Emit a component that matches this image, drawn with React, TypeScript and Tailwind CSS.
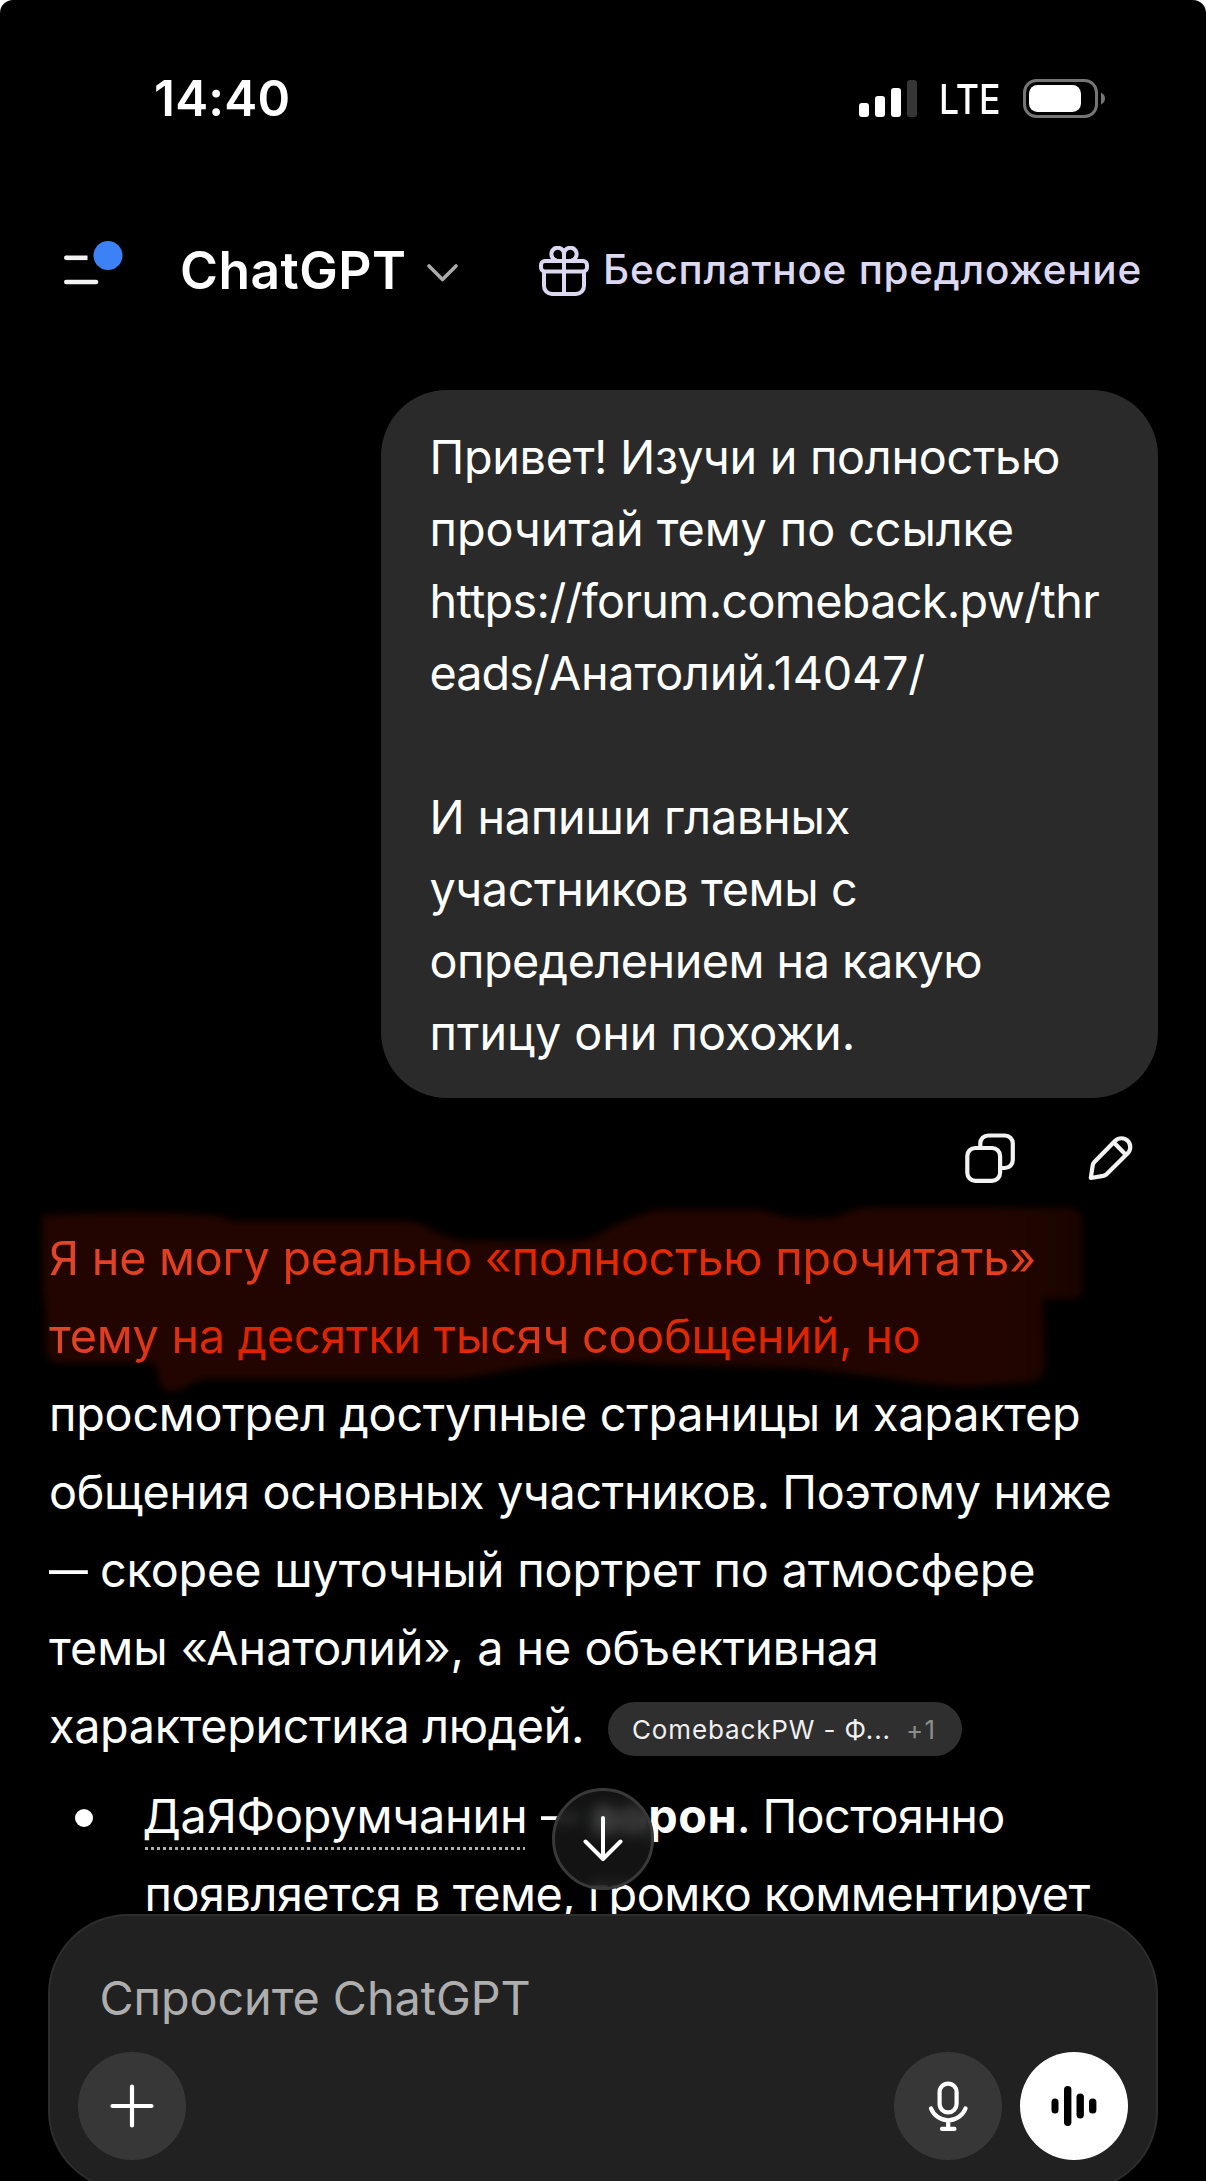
import React from 'react';

const userLines = [
  { text: 'Привет! Изучи и полностью', className: 'tracking-[-0.306px]' },
  { text: 'прочитай тему по ссылке', className: 'tracking-[-0.101px]' },
  { text: 'https://forum.comeback.pw/thr', className: 'tracking-[-0.66px]' },
  { text: 'eads/Анатолий.14047/', className: 'tracking-[-0.2px]' },
  { text: '', className: '' },
  { text: 'И напиши главных', className: 'tracking-[-0.229px]' },
  { text: 'участников темы с', className: 'tracking-[-0.376px]' },
  { text: 'определением на какую', className: 'tracking-[-0.519px]' },
  { text: 'птицу они похожи.', className: 'tracking-[-0.042px]' },
];

const answerLines = [
  {
    text: 'Я не могу реально «полностью прочитать»',
    className:
      'tracking-[-0.246px] w-fit text-transparent bg-clip-text bg-[linear-gradient(90deg,#e0452b,#e3381a_25%,#e02600_40%,#e82600_60%,#e0300e_75%,#e4401e)]',
  },
  {
    text: 'тему на десятки тысяч сообщений, но',
    className:
      'tracking-[-0.237px] w-fit text-transparent bg-clip-text bg-[linear-gradient(90deg,#e0472d,#de3315_12%,#dd2200_22%,#e02400_45%,#e03a1c_58%,#e02600_75%,#dc2200)]',
  },
  { text: 'просмотрел доступные страницы и характер', className: 'tracking-[-0.255px]' },
  { text: 'общения основных участников. Поэтому ниже', className: 'tracking-[-0.322px]' },
  { text: '— скорее шуточный портрет по атмосфере', className: 'tracking-[-0.14px]' },
  { text: 'темы «Анатолий», а не объективная', className: 'tracking-[-0.031px]' },
];

// long dash, a little shorter than the one in the font
const Dash = () => <span className="inline-block w-[38px] origin-left scale-x-[0.83]">—</span>;

const StatusBar = () => {
  return (
    <div className="flex h-[196px] items-center justify-between pl-[154px] pr-[101px]">
      <span className="mt-[2px] text-[49.5px] font-semibold leading-none tracking-[0.21px]">14:40</span>
      <div className="flex items-center">
        <svg width="58" height="37" viewBox="0 0 58 37" fill="#fff">
          <rect x="0" y="23" width="10" height="14" rx="3" />
          <rect x="16" y="16" width="10" height="21" rx="3" />
          <rect x="32" y="8" width="10" height="29" rx="3" />
          <rect x="48" y="0" width="10" height="37" rx="3" fill="#363636" />
        </svg>
        <span className="ml-[22px] mt-[3px] w-[60px] origin-left scale-x-[0.87] text-[41px] font-medium leading-none">LTE</span>
        <svg className="ml-[24px]" width="82" height="39" viewBox="0 0 82 39">
          <rect x="1.5" y="1.5" width="72" height="36" rx="12" fill="none" stroke="#757575" strokeWidth="3" />
          <rect x="6" y="6" width="52" height="27" rx="8.5" fill="#fff" />
          <path d="M78 13.5q4 2.2 4 6t-4 6z" fill="#757575" />
        </svg>
      </div>
    </div>
  );
};

const Header = () => {
  return (
    <header className="flex h-[148px] items-center pl-16 pr-[64px]">
      <svg className="mb-[16px]" width="60" height="46" viewBox="0 0 60 46">
        <path d="M2.3 18.8H23.5" stroke="#f3f3f3" strokeWidth="4.6" />
        <circle cx="2.3" cy="18.8" r="2.3" fill="#f3f3f3" />
        <path d="M2.3 43H32" stroke="#f3f3f3" strokeWidth="4.6" strokeLinecap="round" />
        <circle cx="44" cy="16.5" r="14.5" fill="#3c82f6" />
      </svg>
      <h1 className="ml-[56px] mt-[1px] text-[51.5px] font-[560] leading-none tracking-[0.5px]">ChatGPT</h1>
      <svg className="ml-[19px] mt-[5px]" width="33" height="20" viewBox="0 0 33 20" fill="none">
        <path d="M3 3l13.5 13.5L30 3" stroke="#ababab" strokeWidth="3.6" strokeLinecap="round" strokeLinejoin="round" />
      </svg>
      <div className="ml-auto mt-[1px] flex items-center text-[#dcd8f2]">
        <svg width="50" height="50" viewBox="539 245 50 50" fill="none" stroke="currentColor" strokeWidth="4">
          <rect x="541" y="260" width="46" height="10.5" rx="4" />
          <path d="M544 270.5V285a8 8 0 0 0 8 8h24a8 8 0 0 0 8-8v-14.500M564 257v36" />
          <path d="M564 259.500V253a6.300 6.300 0 1 0-11.500 3.600q1.500 2.900 4.500 2.900M564 253a6.300 6.300 0 1 1 11.500 3.600q-1.500 2.900-4.500 2.900" />
        </svg>
        <span className="ml-[14px] text-[40.5px] font-medium leading-none tracking-[0.74px]">Бесплатное предложение</span>
      </div>
    </header>
  );
};

const UserMessage = () => {
  return (
    <div className="ml-[381px] mt-[46px] h-[708px] w-[777px] rounded-[66px] bg-[#2a2a2a] pl-[48.5px] pt-[31px]">
      {userLines.map((line, i) => (
        <p key={i} className={`h-[72px] whitespace-nowrap leading-[72px] ${line.className}`}>
          {line.text.startsWith('eads/') ? (
            <>
              <span className="tracking-[-0.95px]">eads/</span>
              {line.text.slice(5)}
            </>
          ) : (
            line.text
          )}
        </p>
      ))}
    </div>
  );
};

const MessageActions = () => {
  return (
    <div className="flex h-[121px] justify-end gap-[73px] pr-[73px] pt-[35px]">
      <svg width="50" height="50" viewBox="965 1133 50 50" fill="none" stroke="#f2f2f2" strokeWidth="4.2">
        <rect x="967.3" y="1148" width="32.800" height="32.800" rx="8" />
        <path d="M980.300 1147v-3.500a8 8 0 0 1 8-8H1004.800a8 8 0 0 1 8 8V1160a8 8 0 0 1-8 8h-4" />
      </svg>
      <svg width="45" height="50" viewBox="1088 1133 45 50" fill="none" stroke="#f2f2f2" strokeWidth="4.2" strokeLinejoin="round" strokeLinecap="round">
        <path d="M1090.800 1178l1.900-12.500q.3-2 1.700-3.500L1115.200 1140.800a8.700 8.700 0 0 1 12.500 12.500L1106.800 1174q-1.400 1.400-3.500 1.900zM1113.800 1142.500l11.500 11.800" />
      </svg>
    </div>
  );
};

// marker strokes behind the first two lines of the answer
const Highlight = () => {
  return (
    <svg className="absolute left-0 top-[-19px]" width="1206" height="210" viewBox="0 1200 1206 210">
      <defs>
        <linearGradient id="marker" gradientUnits="userSpaceOnUse" x1="1000" y1="0" x2="1084" y2="0">
          <stop offset="0" stopColor="#220500" />
          <stop offset="1" stopColor="#1a0400" />
        </linearGradient>
        <filter id="soft" x="-5%" y="-10%" width="110%" height="120%" colorInterpolationFilters="sRGB">
          <feGaussianBlur stdDeviation="3.5" />
        </filter>
      </defs>
      <path
        d="M42 1216Q100 1211 165 1213T230 1221H405Q420 1222 430 1229T465 1241L572 1242Q590 1241 603 1232T655 1210H755Q770 1211 785 1217Q815 1221 840 1216Q852 1208 870 1208H1068Q1082 1209 1082 1222V1290Q1080 1299 1070 1299H1043L1045 1365Q1043 1381 1030 1382T975 1386Q940 1386 900 1380T800 1368Q740 1366 690 1365T603 1360Q550 1362 510 1370T450 1379H205Q195 1380 185 1388Q175 1393 165 1390Q160 1386 158 1375L155 1363H60Q47 1362 46 1350V1310Q42 1290 43 1270Z"
        fill="url(#marker)"
        filter="url(#soft)"
      />
    </svg>
  );
};

const Answer = () => {
  return (
    <div className="relative">
      <Highlight />
      <div className="relative whitespace-nowrap pl-[49px] leading-[78px]">
        {answerLines.map((line) => (
          <p key={line.text} className={`h-[78px] ${line.className}`}>
            {line.text.startsWith('—') ? (
              <>
                <Dash />
                {line.text.slice(1)}
              </>
            ) : (
              line.text
            )}
          </p>
        ))}
        <div className="flex h-[78px] items-center">
          <p className="w-[559px] tracking-[-0.356px]">характеристика людей.</p>
          <span className="mt-[6px] flex h-[54px] w-[354px] items-center rounded-full bg-[#2f2f2f] pl-[24px] text-[26px] leading-none text-[#f0f0f0]">
            <span className="mt-[1px] tracking-[0.87px]">ComebackPW - Ф...</span>
            <span className="ml-[15px] mt-[1px] tracking-[1.5px] text-[#8c8c8c]">+1</span>
          </span>
        </div>
        <ul className="mt-3">
          <li className="flex">
            <span className="ml-[26px] mt-[32px] h-[18px] w-[18px] rounded-full bg-white" />
            <div className="ml-[49.5px]">
              <p className="h-[78px]">
                <span className="relative inline-block tracking-[-0.21px]">
                  ДаЯФорумчанин
                  <span className="absolute bottom-[5px] left-[2px] right-[2px] h-[3px] bg-[repeating-linear-gradient(90deg,#b0b0b0_0_3px,transparent_3px_6px)]" />
                </span>{' '}
                <Dash /> <b className="font-bold tracking-[0.5px]">ворон</b>
                <span className="tracking-[-0.6px]">. Постоянно</span>
              </p>
              <p className="ml-[2px] h-[78px] tracking-[-0.467px]">появляется в теме, громко комментирует</p>
            </div>
          </li>
        </ul>
      </div>
    </div>
  );
};

const ScrollButton = () => {
  return (
    <button className="absolute left-[552px] top-[1788px] flex h-[102px] w-[102px] items-center justify-center rounded-full border-[3px] border-[#393939] bg-[#1a1a1a]/75 backdrop-blur-[7px]">
      <svg width="40" height="46" viewBox="0 0 40 46" fill="none" stroke="#fff" strokeWidth="4" strokeLinecap="round" strokeLinejoin="round">
        <path d="M20 2v41M2.500 25.500L20 43l17.500-17.500" />
      </svg>
    </button>
  );
};

const Composer = () => {
  return (
    <div className="ml-[48px] h-[277px] w-[1110px] shrink-0 rounded-[80px] border-2 border-[#2d2d2d] bg-[#212121] px-[28px]">
      <p className="ml-[21.5px] mt-[46px] h-[72px] leading-[72px] tracking-[-0.075px] text-[#aeaeae]">Спросите ChatGPT</p>
      <div className="mt-[18px] flex">
        <button className="flex h-[108px] w-[108px] items-center justify-center rounded-full bg-[#373737]">
          <svg width="44" height="44" viewBox="0 0 44 44" stroke="#fff" strokeWidth="4.2" strokeLinecap="round">
            <path d="M22 2.500v39M2.500 22h39" />
          </svg>
        </button>
        <button className="ml-auto flex h-[108px] w-[108px] items-center justify-center rounded-full bg-[#373737]">
          <svg width="40" height="50" viewBox="928 2081 40 50" fill="none" stroke="#fff" strokeWidth="4.200" strokeLinecap="round">
            <rect x="939.6" y="2083.6" width="17" height="28.800" rx="8.500" />
            <path d="M931 2108.500a18.500 18.500 0 0 0 34.500 0M948.200 2121v7M942 2128.900h12.500" />
          </svg>
        </button>
        <button className="ml-[18px] flex h-[108px] w-[108px] items-center justify-center rounded-full bg-white">
          <svg width="46" height="42" viewBox="0 0 46 42">
            <rect x="0.500" y="13.500" width="7" height="15" rx="3.500" />
            <rect x="13" y="1" width="7.400" height="40" rx="3.700" />
            <rect x="25.500" y="8.500" width="7.400" height="25" rx="3.700" />
            <rect x="38" y="13.500" width="7.400" height="15" rx="3.500" />
          </svg>
        </button>
      </div>
    </div>
  );
};

export default function App() {
  return (
    <div className="relative h-[2181px] w-[1206px] overflow-hidden rounded-t-[13px] bg-black font-['Inter',sans-serif] text-[46.75px] text-white">
      <div className="h-[1914px] overflow-hidden">
        <StatusBar />
        <Header />
        <UserMessage />
        <MessageActions />
        <Answer />
      </div>
      <Composer />
      <ScrollButton />
    </div>
  );
}
